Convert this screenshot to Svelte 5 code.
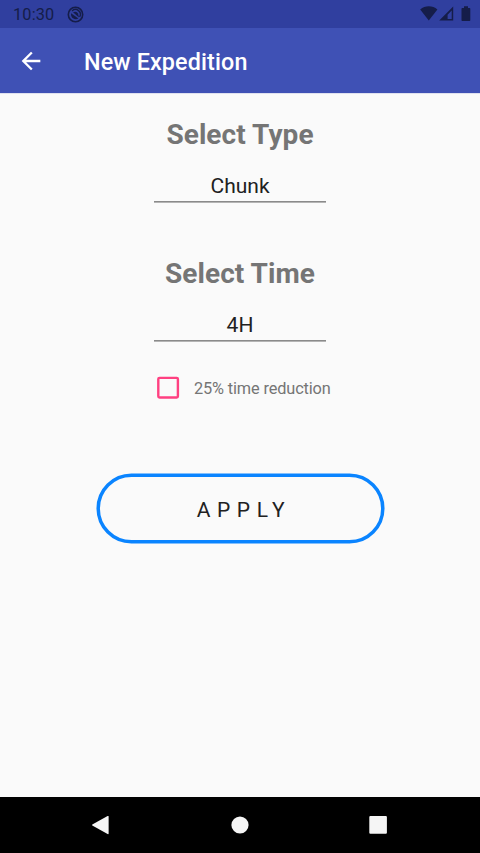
<script>
  let type = $state('Chunk');
  let time = $state('4H');
  let reduced = $state(false);
</script>

<div class="screen">
  <div class="status">
    <span class="clock">10:30</span>
    <svg class="sync" width="17" height="17" viewBox="0 0 17 17">
      <circle cx="8.5" cy="8.5" r="7.2" fill="none" stroke="currentColor" stroke-width="1.6" />
      <path d="M5.1 5A4.8 4.8 0 0 1 12.6 10.9" fill="none" stroke="currentColor" stroke-width="1.4" />
      <path d="M6 6.2Q9.6 4.8 11 7.4L12 11.4Z" fill="currentColor" />
      <path d="M4.1 7.2L11.4 12.4A4.9 4.9 0 0 1 4.1 7.2Z" fill="currentColor" />
    </svg>
    <div class="signals">
      <svg width="18" height="15" viewBox="0 0 18 15">
        <path d="M0.2 3.4C5 -0.7 12.6 -0.7 17.4 3.4L8.8 14.4Z" fill="currentColor" />
      </svg>
      <svg class="cell" width="15" height="15" viewBox="0 0 15 15">
        <path fill-rule="evenodd" d="M14.2 0.5V14.4H0.2ZM12.7 4.6L8.6 8.7V12.9H12.7Z" fill="currentColor" />
      </svg>
      <svg class="battery" width="10" height="16" viewBox="0 0 10 16">
        <path d="M3 0.3H7V2H8.6Q9.3 2 9.3 2.8V14.2Q9.3 15 8.6 15H1.2Q0.5 15 0.5 14.2V2.8Q0.5 2 1.2 2H3Z" fill="currentColor" />
      </svg>
    </div>
  </div>

  <header>
    <svg width="28" height="28" viewBox="0 0 24 24">
      <path d="M20 11H7.83l5.59-5.59L12 4l-8 8 8 8 1.41-1.41L7.83 13H20v-2z" fill="#fff" />
    </svg>
    <h1>New Expedition</h1>
  </header>

  <main>
    <h2>Select Type</h2>
    <div class="field">{type}</div>
    <h2 class="second">Select Time</h2>
    <div class="field">{time}</div>
    <label>
      <input type="checkbox" bind:checked={reduced} />
      <svg class="box" width="24" height="24" viewBox="0 0 24 24">
        <rect x="2.3" y="1.9" width="19.6" height="19.6" rx="1.2" fill="none" stroke="#ff4081" stroke-width="2.4" />
        {#if reduced}
          <path d="M6 12l4 4 8-9" fill="none" stroke="#ff4081" stroke-width="2.4" />
        {/if}
      </svg>
      <span>25% time reduction</span>
    </label>
    <button>
      <svg width="290" height="72" viewBox="0 0 290 72">
        <rect x="3.2" y="2.25" width="284.6" height="66.6" rx="33.3" fill="none" stroke="#0a84ff" stroke-width="3.5" />
      </svg>
      <span>APPLY</span>
    </button>
  </main>

  <nav>
    <svg width="18" height="20" viewBox="0 0 18 20">
      <path d="M0.3 9.5L15.6 1Q16.6 0.6 16.6 1.6V18.5Q16.6 19.5 15.6 19.1L0.3 10.6Q-0.2 10 0.3 9.5Z" fill="#f5f5f5" />
    </svg>
    <svg class="home" width="18" height="18" viewBox="0 0 18 18">
      <circle cx="9" cy="9" r="8.6" fill="#f5f5f5" />
    </svg>
    <svg class="recent" width="18" height="18" viewBox="0 0 18 18">
      <rect x="0.3" y="0.1" width="17.6" height="17.7" rx="1" fill="#f5f5f5" />
    </svg>
  </nav>
</div>

<style>
  :global(body) {
    margin: 0;
  }
  .screen {
    width: 480px;
    height: 853px;
    display: flex;
    flex-direction: column;
    background: #fafafa;
    font-family: Roboto, sans-serif;
    overflow: hidden;
  }
  svg {
    display: block;
    flex: none;
  }
  .status {
    height: 28px;
    box-sizing: border-box;
    flex: none;
    display: flex;
    align-items: flex-start;
    padding: 0 9px 0 13px;
    background: #303f9f;
    color: #151d49;
  }
  .clock {
    font-size: 16.33px;
    line-height: 28px;
    width: 54px;
    letter-spacing: 0.15px;
    padding-top: 1px;
    height: 27px;
  }
  .sync {
    margin-top: 5.5px;
  }
  .signals {
    display: flex;
    margin-left: auto;
    padding-top: 6px;
  }
  .cell {
    margin-left: 1px;
  }
  .battery {
    margin-left: 7px;
  }
  header {
    height: 65px;
    flex: none;
    box-sizing: border-box;
    display: flex;
    align-items: center;
    padding-left: 17px;
    background: #3f51b5;
    box-shadow: 0 1px 0 #dfe1ef;
  }
  h1 {
    margin: 2px 0 0 39px;
    color: #fff;
    font-size: 23.33px;
    line-height: 28px;
    font-weight: 500;
    letter-spacing: 0.13px;
  }
  main {
    flex: 1;
    display: flex;
    flex-direction: column;
    align-items: center;
  }
  h2 {
    margin: 25px 0 0;
    font-size: 28px;
    line-height: 34px;
    font-weight: 700;
    letter-spacing: 0.07px;
    color: #757575;
  }
  .second {
    margin-top: 54px;
  }
  .field {
    box-sizing: border-box;
    width: 172px;
    height: 34px;
    margin-top: 17px;
    text-align: center;
    font-size: 21px;
    line-height: 34px;
    color: #212121;
    background: linear-gradient(#8a8a8a 50%, #b4b4b4 50%) bottom / 100% 2px no-repeat;
  }
  label {
    display: flex;
    align-items: center;
    align-self: flex-start;
    margin: 34px 0 0 156px;
    height: 24px;
    font-size: 16.33px;
    letter-spacing: -0.14px;
    color: #757575;
  }
  input {
    appearance: none;
    width: 0;
    height: 0;
    margin: 0;
  }
  .box {
    margin-right: 14px;
  }
  button {
    display: grid;
    place-items: center;
    width: 290px;
    height: 72px;
    margin: 73px 0 0;
    padding: 0;
    border: 0;
    background: transparent;
    font: 400 21px Roboto, sans-serif;
    letter-spacing: 6.6px;
    color: #212121;
  }
  button > * {
    grid-area: 1 / 1;
  }
  button span {
    padding: 1px 0 0 8px;
  }
  nav {
    height: 56px;
    flex: none;
    display: flex;
    align-items: center;
    padding-left: 92px;
    background: #000;
  }
  .home {
    margin-left: 121px;
  }
  .recent {
    margin-left: 120px;
  }
</style>
